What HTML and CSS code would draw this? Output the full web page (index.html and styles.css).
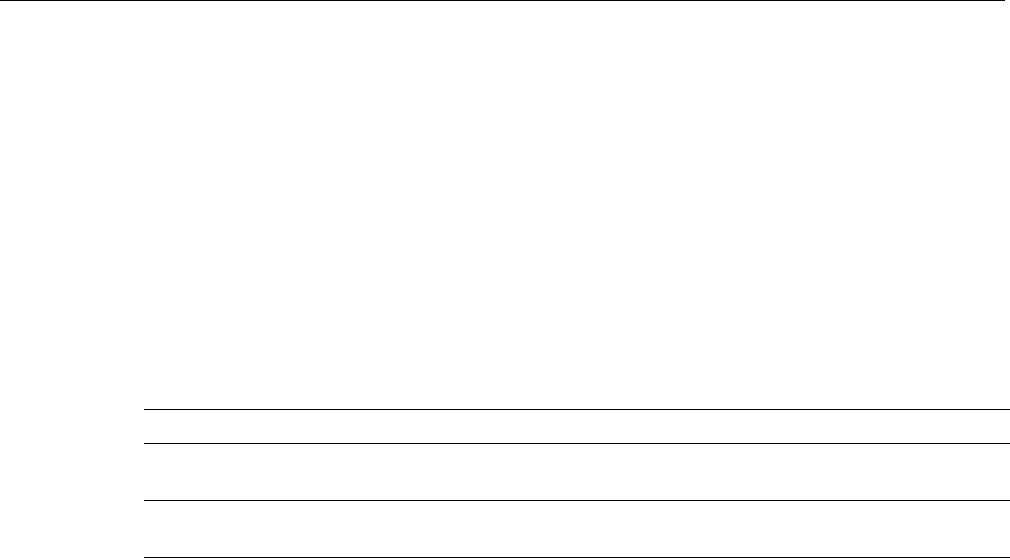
FILE: index.html
```html
<!DOCTYPE html>
<html lang="en">
<head>
<meta charset="utf-8">
<title>Page</title>
<link rel="stylesheet" href="styles.css">
</head>
<body>
<header class="topbar"></header>
<main class="content">
  <div class="spacer"></div>
  <div class="rows">
    <div class="row row-head"></div>
    <div class="row row-tall"></div>
    <div class="row row-tall"></div>
  </div>
</main>
</body>
</html>
```
FILE: styles.css
```css
html, body {
  margin: 0;
  padding: 0;
  background: #ffffff;
  font-family: "Liberation Sans", Arial, sans-serif;
  overflow: hidden;
}
.topbar {
  width: 1005px;
  border-top: 1px solid #000000;
}
.content {
  display: flex;
  flex-direction: column;
}
.spacer {
  height: 408px;
}
.rows {
  margin-left: 144px;
  border-top: 1px solid #000000;
}
.row {
  border-bottom: 1px solid #000000;
}
.row-head {
  height: 33px;
}
.row-tall {
  height: 56px;
}
```
